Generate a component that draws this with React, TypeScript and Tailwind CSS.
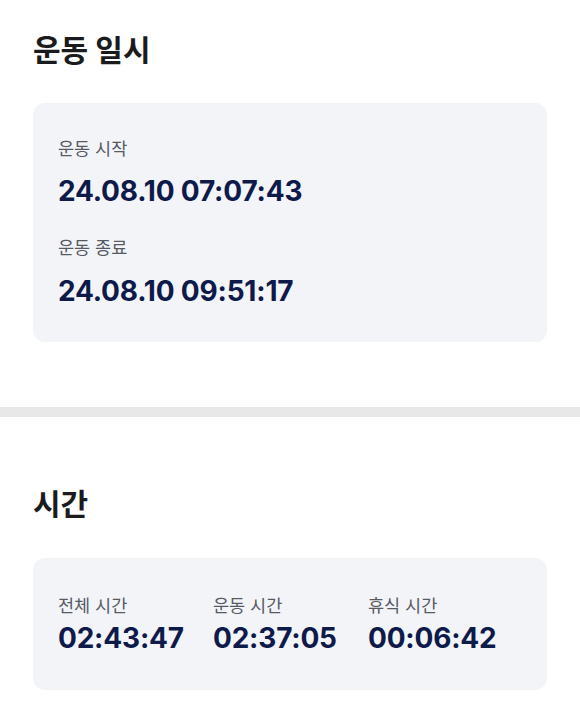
import React from "react";

const font = "font-['Inter','Noto_Sans_CJK_KR',sans-serif]";

function Label({ children }: { children: React.ReactNode }) {
  return <div className="h-6 text-[17.5px] leading-6 text-[#555a63]">{children}</div>;
}

function Value({ children, className = "" }: { children: React.ReactNode; className?: string }) {
  return (
    <div className={`text-[28px] font-bold leading-8 tracking-[-0.2px] text-[#0d1a4a] ${className}`}>
      {children}
    </div>
  );
}

export default function App() {
  const times = [
    { label: "전체 시간", value: "02:43:47" },
    { label: "운동 시간", value: "02:37:05" },
    { label: "휴식 시간", value: "00:06:42" },
  ];

  return (
    <div className={`min-h-[707px] w-[580px] bg-white ${font}`}>
      {/* 운동 일시 */}
      <section className="px-[33px] pt-[32px] pb-[65px]">
        <h2 className="text-[30px] font-bold leading-9 text-[#1b1b1d]">운동 일시</h2>
        <div className="mt-[35px] rounded-xl bg-[#f3f4f8] px-[25px] pt-[34px] pb-[35px]">
          <Label>운동 시작</Label>
          <Value className="mt-[14px]">24.08.10 07:07:43</Value>
          <div className="mt-[29px]">
            <Label>운동 종료</Label>
          </div>
          <Value className="mt-[15px]">24.08.10 09:51:17</Value>
        </div>
      </section>

      <div className="h-[10px] bg-[#e8e8e8]" />

      {/* 시간 */}
      <section className="px-[33px] pt-[69px] pb-[18px]">
        <h2 className="text-[30px] font-bold leading-9 text-[#1b1b1d]">시간</h2>
        <div className="mt-[36px] grid grid-cols-[155px_155px_1fr] rounded-xl bg-[#f3f4f8] px-[25px] pt-[36px] pb-[36px]">
          {times.map((t) => (
            <div key={t.label}>
              <Label>{t.label}</Label>
              <Value className="mt-[4px]">{t.value}</Value>
            </div>
          ))}
        </div>
      </section>
    </div>
  );
}
